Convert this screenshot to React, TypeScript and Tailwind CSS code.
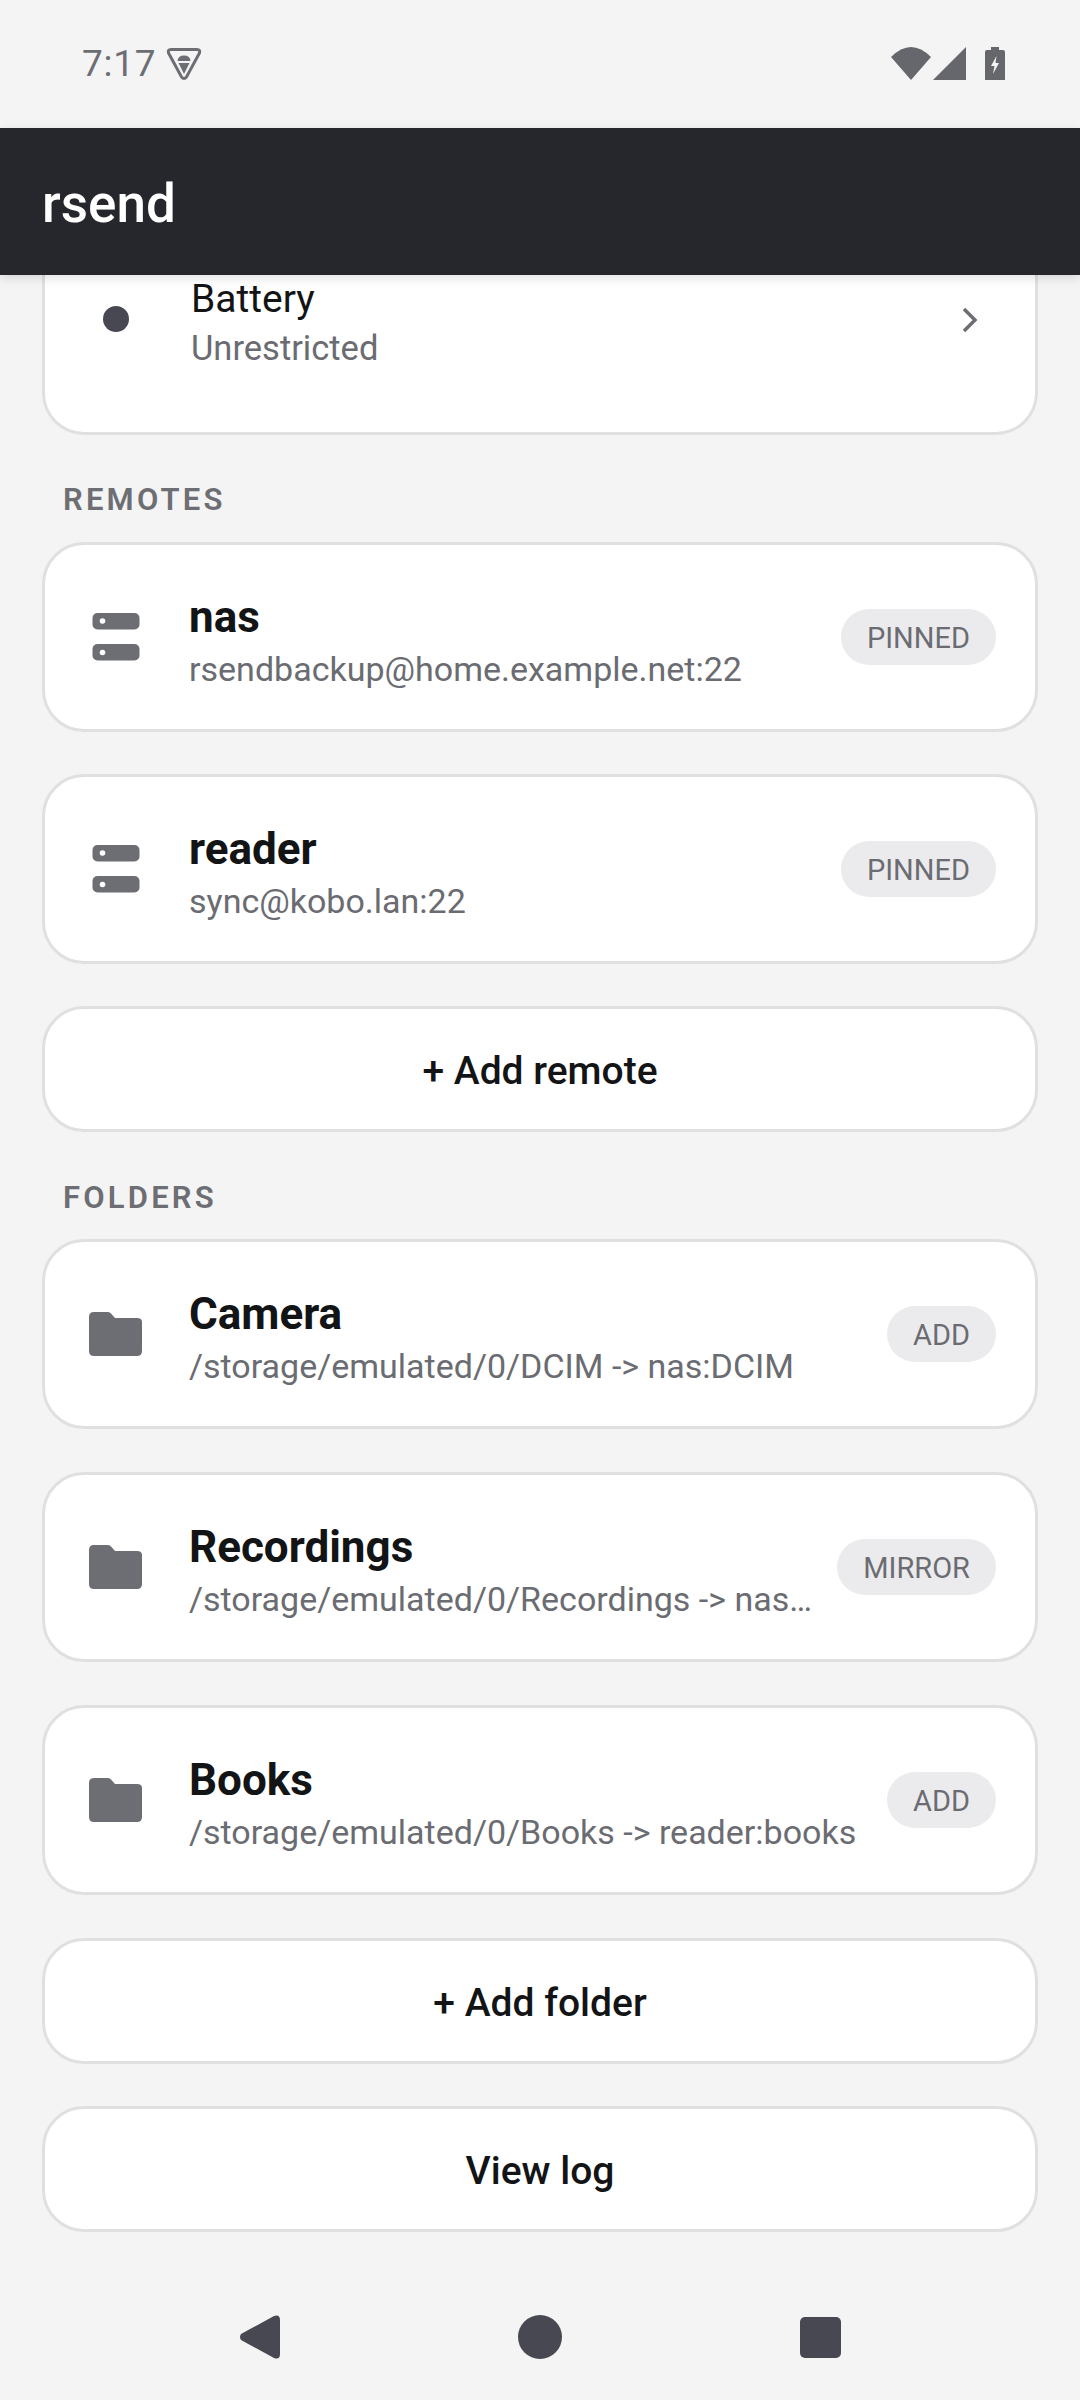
const font = { fontFamily: "Roboto, sans-serif" };

function VpnShield() {
  return (
    <svg width="36" height="34" viewBox="0 0 36 34" className="ml-[10px]">
      <path d="M5 2.5 H31 Q34.5 2.5 33.5 6 L20.5 30 Q18 33 15.5 30 L2.5 6 Q1.5 2.5 5 2.5 Z" fill="none" stroke="#6d6e73" strokeWidth="3" />
      <path d="M11.5 14 Q12 8.5 18 8.5 Q24 8.5 24.5 14 Z" fill="#6d6e73" />
      <path d="M12.5 16 H23.5 L18 27 Z" fill="#6d6e73" />
    </svg>
  );
}

function StatusIcons() {
  return (
    <div className="mb-[2px] flex items-center">
      <svg width="40" height="33" viewBox="0 0 40 33">
        <path d="M0 10 Q20 -10 40 10 L20 33 Z" fill="#66676c" />
      </svg>
      <svg width="33" height="33" viewBox="0 0 33 33" className="ml-[2px]">
        <path d="M33 0 V33 H0 Z" fill="#66676c" />
      </svg>
      <svg width="20" height="33" viewBox="0 0 20 33" className="ml-[19px]">
        <path d="M6 0 H14 V3 H18 Q20 3 20 5 V33 H0 V5 Q0 3 2 3 H6 Z" fill="#66676c" />
        <path d="M11.5 9 L6 19 H9.5 L8 27 L14 16 H10.5 Z" fill="#f4f4f4" />
      </svg>
    </div>
  );
}

function ServerIcon() {
  return (
    <svg width="48" height="48" viewBox="0 0 48 48" className="shrink-0">
      <rect x="0.5" y="0" width="47" height="16.5" rx="5" fill="#6d6e73" />
      <circle cx="10.5" cy="8" r="2.8" fill="#fff" />
      <rect x="0.5" y="31" width="47" height="16.5" rx="5" fill="#6d6e73" />
      <circle cx="10.5" cy="39.5" r="2.8" fill="#fff" />
    </svg>
  );
}

function FolderIcon() {
  return (
    <svg width="53" height="44" viewBox="0 0 53 44" className="shrink-0">
      <path d="M5 0 H19 Q21 0 22 1.5 L26 6 H48 Q53 6 53 10 V39 Q53 44 48 44 H5 Q0 44 0 39 V5 Q0 0 5 0 Z" fill="#6d6e73" />
    </svg>
  );
}

type Row = { icon: "server" | "folder"; title: string; sub: string; tag: string };

const remotes: Row[] = [
  { icon: "server", title: "nas", sub: "rsendbackup@home.example.net:22", tag: "PINNED" },
  { icon: "server", title: "reader", sub: "sync@kobo.lan:22", tag: "PINNED" },
];

const folders: Row[] = [
  { icon: "folder", title: "Camera", sub: "/storage/emulated/0/DCIM -> nas:DCIM", tag: "ADD" },
  { icon: "folder", title: "Recordings", sub: "/storage/emulated/0/Recordings -> nas:Recordings", tag: "MIRROR" },
  { icon: "folder", title: "Books", sub: "/storage/emulated/0/Books -> reader:books", tag: "ADD" },
];

function ItemCard({ row }: { row: Row }) {
  return (
    <div className="flex h-[190px] items-center rounded-[42px] border-[3px] border-[#e0e0e2] bg-white pr-[39px]">
      <div className="flex w-[144px] shrink-0 justify-center pr-[3px]">
        {row.icon === "server" ? <ServerIcon /> : <FolderIcon />}
      </div>
      <div className="min-w-0 flex-1 pt-[8px] pr-[23px]">
        <div className="text-[44px] leading-[52px] font-bold text-[#131416]">{row.title}</div>
        <div className="mt-[4px] truncate text-[34px] leading-[44px] text-[#6b6c72]">{row.sub}</div>
      </div>
      <div className="flex h-[56px] shrink-0 items-center rounded-full bg-[#ebebed] px-[26px] pt-[4px] text-[29px] text-[#6b6c72]">
        {row.tag}
      </div>
    </div>
  );
}

function WideButton({ label }: { label: string }) {
  return (
    <div className="flex h-[126px] items-center justify-center rounded-[42px] border-[3px] border-[#e0e0e2] bg-white pt-[5px] text-[39px] font-medium text-[#131416]">
      {label}
    </div>
  );
}

function SectionLabel({ label }: { label: string }) {
  return (
    <div className="pl-[21px] text-[31px] leading-[36px] font-semibold tracking-[3.2px] text-[#6d6e73]">{label}</div>
  );
}

export default function App() {
  return (
    <div className="flex h-[2400px] w-[1080px] flex-col overflow-hidden bg-[#f4f4f4]" style={font}>
      <div className="flex h-[128px] shrink-0 items-center justify-between pr-[75px] pl-[82px]">
        <div className="flex items-center">
          <span className="text-[37px] tracking-[0.7px] text-[#6d6e73]">7:17</span>
          <VpnShield />
        </div>
        <StatusIcons />
      </div>

      <div className="relative z-10 flex h-[147px] shrink-0 items-center bg-[#26272c] pt-[6px] pl-[42px] text-[53px] font-medium text-white shadow-[0_3px_10px_rgba(0,0,0,0.12)]">
        rsend
      </div>

      <div className="flex min-h-0 flex-1 flex-col px-[42px]">
        {/* first card is scrolled under the toolbar */}
        <div className="-mt-[20px] flex h-[180px] shrink-0 items-start rounded-b-[42px] border-x-[3px] border-b-[3px] border-[#e0e0e2] bg-white pt-[20px]">
          <div className="flex w-[146px] shrink-0 justify-center pt-[31px] pr-[5px]">
            <div className="h-[26px] w-[26px] rounded-full bg-[#484852]" />
          </div>
          <div className="flex-1 pt-[2px]">
            <div className="text-[39px] leading-[44px] text-[#131416]">Battery</div>
            <div className="text-[34.5px] leading-[54px] text-[#6b6c72]">Unrestricted</div>
          </div>
          <svg width="20" height="28" viewBox="0 0 20 28" className="mt-[31px] mr-[55px]">
            <path d="M4 3 L15 14 L4 25" fill="none" stroke="#6d6e73" strokeWidth="3.5" />
          </svg>
        </div>

        <div className="mt-[47px]">
          <SectionLabel label="REMOTES" />
        </div>
        <div className="mt-[24px] flex flex-col gap-[42px]">
          {remotes.map((row) => (
            <ItemCard key={row.title} row={row} />
          ))}
          <WideButton label="+ Add remote" />
        </div>

        <div className="mt-[48px]">
          <SectionLabel label="FOLDERS" />
        </div>
        <div className="mt-[23px] flex flex-col gap-[43px]">
          {folders.map((row) => (
            <ItemCard key={row.title} row={row} />
          ))}
          <WideButton label="+ Add folder" />
          <div className="-mt-[1px]">
            <WideButton label="View log" />
          </div>
        </div>
      </div>

      <div className="flex h-[126px] shrink-0 items-center justify-center">
        <svg width="41" height="44" viewBox="0 0 41 44" className="mr-[238px]">
          <path d="M35 1 Q41 -1 41 5 V39 Q41 45 35 43 L2 25 Q0 22 2 19 Z" fill="#484852" />
        </svg>
        <div className="h-[44px] w-[44px] rounded-full bg-[#484852]" />
        <div className="ml-[238px] h-[41px] w-[41px] rounded-[5px] bg-[#484852]" />
      </div>
    </div>
  );
}
